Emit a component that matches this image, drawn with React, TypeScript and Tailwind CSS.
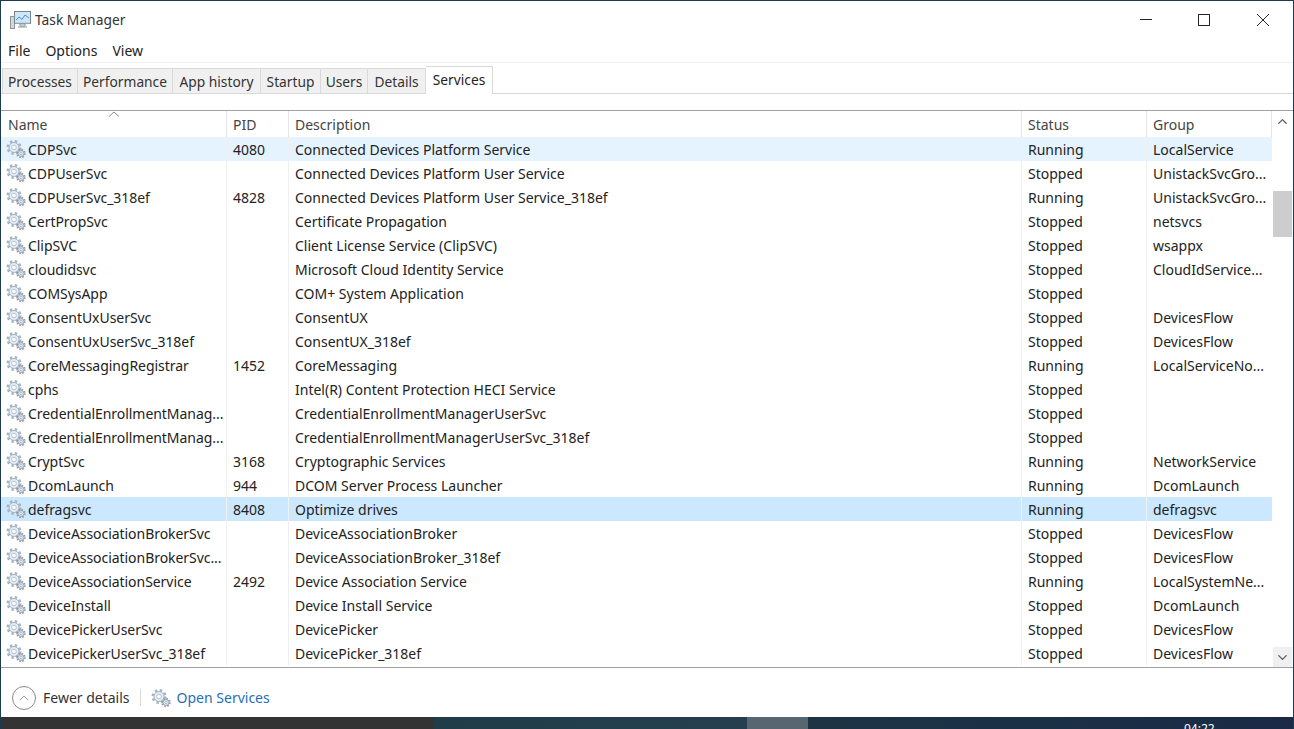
import { ChevronDown, ChevronUp } from "lucide-react";

const SERVICES = [
  ["CDPSvc", "4080", "Connected Devices Platform Service", "Running", "LocalService"],
  ["CDPUserSvc", "", "Connected Devices Platform User Service", "Stopped", "UnistackSvcGro..."],
  ["CDPUserSvc_318ef", "4828", "Connected Devices Platform User Service_318ef", "Running", "UnistackSvcGro..."],
  ["CertPropSvc", "", "Certificate Propagation", "Stopped", "netsvcs"],
  ["ClipSVC", "", "Client License Service (ClipSVC)", "Stopped", "wsappx"],
  ["cloudidsvc", "", "Microsoft Cloud Identity Service", "Stopped", "CloudIdService..."],
  ["COMSysApp", "", "COM+ System Application", "Stopped", ""],
  ["ConsentUxUserSvc", "", "ConsentUX", "Stopped", "DevicesFlow"],
  ["ConsentUxUserSvc_318ef", "", "ConsentUX_318ef", "Stopped", "DevicesFlow"],
  ["CoreMessagingRegistrar", "1452", "CoreMessaging", "Running", "LocalServiceNo..."],
  ["cphs", "", "Intel(R) Content Protection HECI Service", "Stopped", ""],
  ["CredentialEnrollmentManag...", "", "CredentialEnrollmentManagerUserSvc", "Stopped", ""],
  ["CredentialEnrollmentManag...", "", "CredentialEnrollmentManagerUserSvc_318ef", "Stopped", ""],
  ["CryptSvc", "3168", "Cryptographic Services", "Running", "NetworkService"],
  ["DcomLaunch", "944", "DCOM Server Process Launcher", "Running", "DcomLaunch"],
  ["defragsvc", "8408", "Optimize drives", "Running", "defragsvc"],
  ["DeviceAssociationBrokerSvc", "", "DeviceAssociationBroker", "Stopped", "DevicesFlow"],
  ["DeviceAssociationBrokerSvc...", "", "DeviceAssociationBroker_318ef", "Stopped", "DevicesFlow"],
  ["DeviceAssociationService", "2492", "Device Association Service", "Running", "LocalSystemNe..."],
  ["DeviceInstall", "", "Device Install Service", "Stopped", "DcomLaunch"],
  ["DevicePickerUserSvc", "", "DevicePicker", "Stopped", "DevicesFlow"],
  ["DevicePickerUserSvc_318ef", "", "DevicePicker_318ef", "Stopped", "DevicesFlow"],
];

const TABS = [
  { label: "Processes", width: "w-[76px]" },
  { label: "Performance", width: "w-[95px]" },
  { label: "App history", width: "w-[88px]" },
  { label: "Startup", width: "w-[60px]" },
  { label: "Users", width: "w-[47px]" },
  { label: "Details", width: "w-[58px]" },
];

function GearIcon() {
  return (
    <svg width="22" height="20" viewBox="0 0 22 20" className="shrink-0" fill="none">
      <circle cx="9" cy="8.5" r="6.2" stroke="#a5b3c2" strokeWidth="2.6" strokeDasharray="2.4 2.47" />
      <circle cx="9" cy="8.5" r="5" fill="#e6edf4" stroke="#a3b2c2" strokeWidth="1" />
      <circle cx="9" cy="8.5" r="2.3" fill="#ffffff" stroke="#b0c4d8" strokeWidth="1" />
      <circle cx="16" cy="14.5" r="3.8" stroke="#8b98a6" strokeWidth="1.8" strokeDasharray="1.5 1.48" />
      <circle cx="16" cy="14.5" r="3" fill="#e3e9ef" stroke="#8796a5" strokeWidth="0.8" />
      <circle cx="16" cy="14.5" r="1.2" fill="#ffffff" stroke="#93a3b3" strokeWidth="0.7" />
    </svg>
  );
}

function AppIcon() {
  return (
    <svg width="21" height="18" viewBox="0 0 21 18" fill="none">
      <rect x="0.5" y="5.5" width="4" height="12" fill="#d5d8da" stroke="#8f9497" />
      <rect x="4.5" y="0.5" width="16" height="12" fill="#cfe6f6" stroke="#77848c" />
      <path d="M6 9l3-3 3 2.5L15 4l4 3" stroke="#3f93d0" strokeWidth="1" />
      <path d="M5 12h15" stroke="#a4c9e3" />
      <path d="M10 13h5v2h-5zM8 16h9" stroke="#8f9497" />
    </svg>
  );
}

export default function App() {
  return (
    <div className="flex h-[729px] w-[1294px] flex-col overflow-hidden bg-[#1e3a52] font-['Noto_Sans',sans-serif] text-[14px] text-[#222]">
      <div className="mx-px mt-px flex h-[716px] flex-col bg-white">
        {/* title bar */}
        <div className="flex h-[37px] shrink-0 items-center">
          <div className="ml-[9px] mr-[4px] flex">
            <AppIcon />
          </div>
          <span className="pt-[2px] text-[13.8px] text-[#333]">Task Manager</span>
          <div className="ml-auto flex items-center">
            <div className="mr-[46px] h-px w-3 bg-[#222]" />
            <div className="mr-[47px] h-3 w-3 border border-[#222]" />
            <svg width="12" height="12" viewBox="0 0 12 12" className="mr-[24px]" stroke="#222">
              <path d="M0 0l12 12M12 0L0 12" />
            </svg>
          </div>
        </div>
        {/* menu */}
        <div className="flex h-[24px] shrink-0 items-center gap-[15px] pl-[7px] text-[#222]">
          <span>File</span>
          <span>Options</span>
          <span>View</span>
        </div>
        <div className="h-px shrink-0 bg-[#f0f0f0]" />
        {/* tabs */}
        <div className="flex h-[31px] shrink-0 items-end border-b border-[#d9d9d9] pl-[1px] text-[13.75px]">
          <div className="flex h-[25px]">
            {TABS.map((tab) => (
              <div
                key={tab.label}
                className={`-mb-px flex items-center justify-center border border-l-0 border-[#d9d9d9] bg-[#f0f0f0] pt-[2px] text-[#333] first:border-l ${tab.width}`}
              >
                {tab.label}
              </div>
            ))}
          </div>
          <div className="-mb-px flex h-[28px] w-[67px] items-center justify-center border border-b-0 border-l-0 border-[#d9d9d9] bg-white">
            Services
          </div>
        </div>
        <div className="h-[16px] shrink-0" />
        {/* table */}
        <div className="relative flex h-[558px] shrink-0 border-y border-[#a0a0a0]">
          <div className="w-[1271px] shrink-0">
            <div className="grid h-[26px] grid-cols-[226px_62px_733px_125px_125px] text-[#444]">
              {["Name", "PID", "Description", "Status", "Group"].map((col, i) => (
                <div key={col} className={`flex items-end border-r border-[#e5e5e5] pb-[2px] ${i === 0 ? "pl-[7px]" : "pl-[6px]"}`}>
                  {col}
                </div>
              ))}
            </div>
            {SERVICES.map((row, i) => (
              <div
                key={i}
                className={`grid h-[24px] grid-cols-[226px_62px_733px_125px_125px] items-stretch ${i === 0 ? "bg-[#e5f3ff]" : i === 15 ? "bg-[#cce8ff]" : ""}`}
              >
                <div className="flex items-center gap-px overflow-hidden whitespace-nowrap border-r border-[#f0f0f0] pl-[4px] tracking-[-0.05px]">
                  <GearIcon />
                  <span>{row[0]}</span>
                </div>
                <div className="flex items-center border-r border-[#f0f0f0] pl-[6px]">{row[1]}</div>
                <div className="flex items-center border-r border-[#f0f0f0] pl-[6px]">{row[2]}</div>
                <div className="flex items-center border-r border-[#f0f0f0] pl-[6px]">{row[3]}</div>
                <div className="flex items-center whitespace-nowrap pl-[6px]">{row[4]}</div>
              </div>
            ))}
          </div>
          {/* scrollbar */}
          <div className="ml-[1px] flex w-[19px] shrink-0 flex-col">
            <div className="flex h-[20px] items-center justify-center text-[#606060]">
              <ChevronUp size={15} strokeWidth={2.25} />
            </div>
            <div className="mt-[60px] h-[46px] bg-[#cdcdcd]" />
            <div className="mt-auto flex h-[20px] items-center justify-center bg-[#f0f0f0] text-[#606060]">
              <ChevronDown size={15} strokeWidth={2.25} />
            </div>
          </div>
          <svg width="12" height="6" viewBox="0 0 12 6" className="absolute left-[107px] top-[0px]" fill="none" stroke="#888">
            <path d="M1 5.5L6 1l5 4.5" />
          </svg>
        </div>
        {/* footer */}
        <div className="flex flex-1 items-center pl-[11px] pt-[10px]">
          <div className="flex h-[24px] w-[24px] items-center justify-center rounded-full border border-[#8a8a8a] text-[#8a8a8a]">
            <ChevronUp size={16} strokeWidth={1.25} />
          </div>
          <span className="ml-[7px] text-[#333]">Fewer details</span>
          <div className="ml-[10px] mr-[9px] h-[17px] w-px bg-[#d9d9d9]" />
          <GearIcon />
          <span className="ml-[5px] text-[#1f6fb8]">Open Services</span>
        </div>
      </div>
      {/* taskbar peeking under the window */}
      <div className="relative mx-px flex h-[12px] shrink-0 text-[12px] text-white">
        <div className="w-[433px] bg-[#333333]" />
        <div className="w-[313px] bg-gradient-to-r from-[#203c48] to-[#253f4f]" />
        <div className="w-[61px] bg-[#576670]" />
        <div className="flex-1 bg-gradient-to-r from-[#1c3444] to-[#1a2a46]">
          <span className="absolute left-[1183px] top-[5px] leading-[14px]">04:22</span>
        </div>
      </div>
    </div>
  );
}
